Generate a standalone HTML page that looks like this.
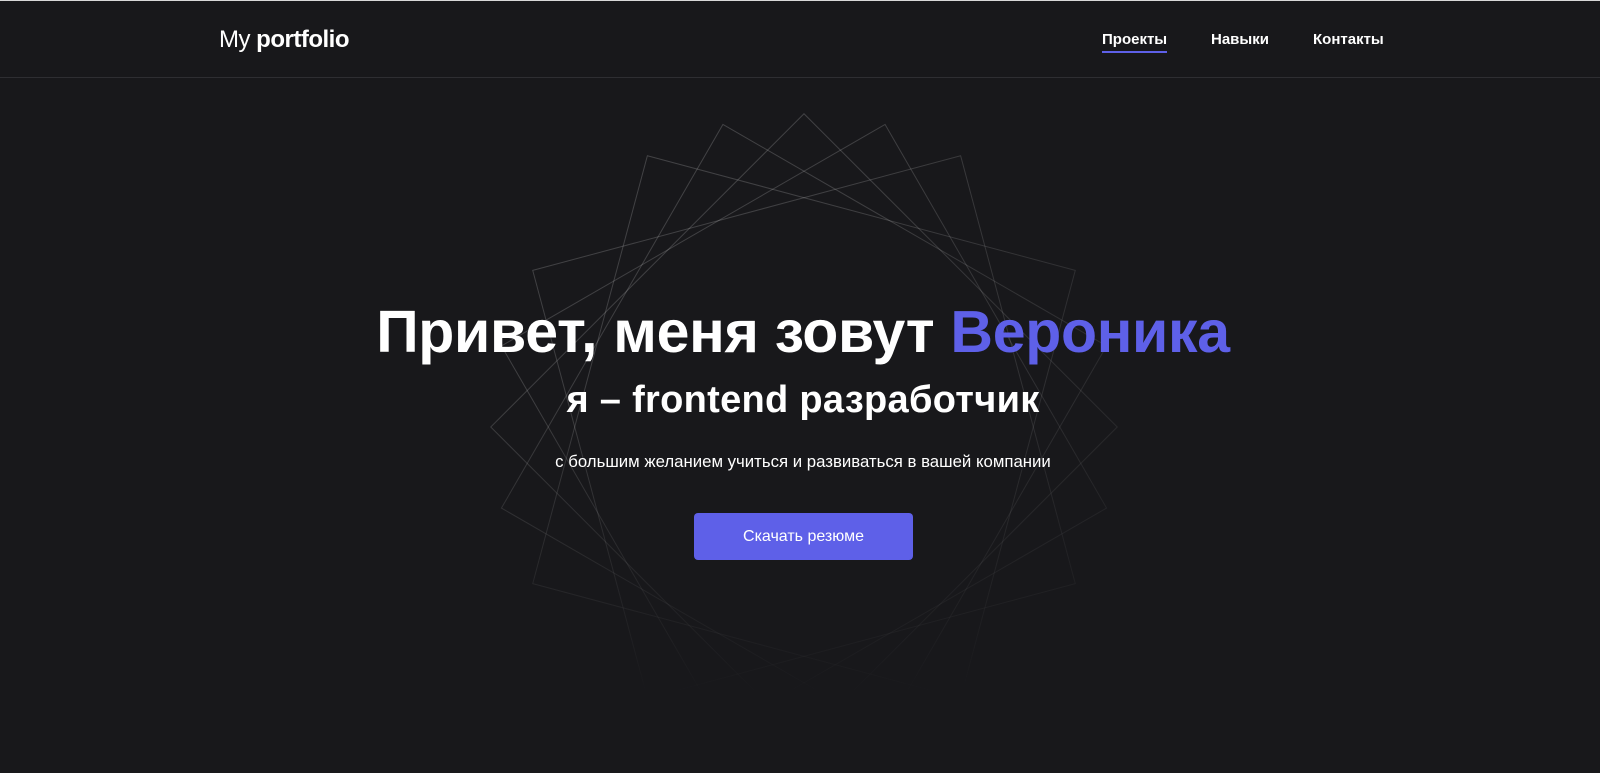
<!DOCTYPE html>
<html><head><meta charset="utf-8"><style>
*{margin:0;padding:0;box-sizing:border-box}
body{width:1600px;height:772px;background:#18181b;color:#fff;font-family:"Liberation Sans",sans-serif;overflow:hidden;position:relative;border-top:1px solid #d8d8d8}
header{position:absolute;top:1px;left:0;width:1600px;height:76px;border-bottom:1px solid #2e2e32}
.logo{position:absolute;left:219px;top:24px;font-size:24px;letter-spacing:-0.5px}
.logo b{font-weight:700}
nav a{position:absolute;top:29px;font-size:15px;font-weight:700;color:#fff;text-decoration:none}
.act{border-bottom:2px solid #5e60e8;padding-bottom:3px}
svg{position:absolute;left:0;top:0}
.c{position:absolute;left:0;width:1606px;text-align:center}
h1{top:297px;font-size:59px;font-weight:700;letter-spacing:-0.3px}
h1 span{color:#5e60e8}
h2{top:378px;font-size:38px;font-weight:700;letter-spacing:0.3px}
p{top:451px;font-size:16.8px}
.btn{position:absolute;left:694px;top:512px;width:219px;height:47px;background:#5e60e8;border-radius:4px;text-align:center;line-height:47px;font-size:16px}
</style></head><body>
<svg width="1600" height="772">
<defs>
<linearGradient id="fg" gradientUnits="userSpaceOnUse" x1="0" y1="100" x2="0" y2="700">
<stop offset="0" stop-color="#fff" stop-opacity="1"/><stop offset="0.5" stop-color="#fff" stop-opacity="0.85"/><stop offset="1" stop-color="#fff" stop-opacity="0"/></linearGradient>
<linearGradient id="fx" gradientUnits="userSpaceOnUse" x1="480" y1="0" x2="1130" y2="0">
<stop offset="0" stop-color="#fff" stop-opacity="1"/><stop offset="0.6" stop-color="#fff" stop-opacity="0.9"/><stop offset="1" stop-color="#fff" stop-opacity="0.45"/></linearGradient>
<mask id="m2" maskUnits="userSpaceOnUse" x="0" y="0" width="1600" height="772"><rect width="1600" height="772" fill="url(#fx)"/></mask>
<mask id="m" maskUnits="userSpaceOnUse" x="0" y="0" width="1600" height="772"><rect width="1600" height="772" fill="url(#fg)"/></mask>
</defs>
<g mask="url(#m2)"><g mask="url(#m)" fill="none" stroke="#fff" stroke-opacity="0.2" stroke-width="1">
<rect x="582.5" y="204.5" width="443" height="443" transform="rotate(45 804 426)"/>
<rect x="582.5" y="204.5" width="443" height="443" transform="rotate(15 804 426)"/>
<rect x="582.5" y="204.5" width="443" height="443" transform="rotate(-15 804 426)"/>
<rect x="582.5" y="204.5" width="443" height="443" transform="rotate(30 804 426)"/>
<rect x="582.5" y="204.5" width="443" height="443" transform="rotate(-30 804 426)"/>
</g></g>
</svg>
<header>
<div class="logo">My <b>portfolio</b></div>
<nav><a class="act" style="left:1102px">Проекты</a><a style="left:1211px">Навыки</a><a style="left:1313px">Контакты</a></nav>
</header>
<h1 class="c">Привет, меня зовут <span>Вероника</span></h1>
<h2 class="c">я – frontend разработчик</h2>
<p class="c">с большим желанием учиться и развиваться в вашей компании</p>
<div class="btn">Скачать резюме</div>
</body></html>
